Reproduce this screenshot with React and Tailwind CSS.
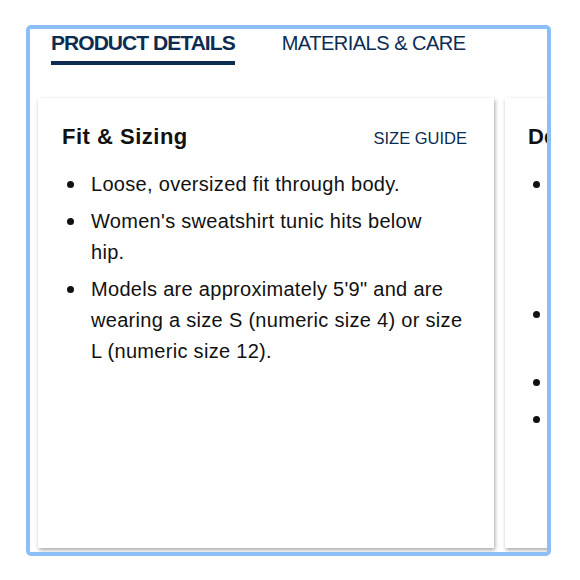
const fitItems = [
  ["Loose, oversized fit through body."],
  ["Women's sweatshirt tunic hits below", "hip."],
  ["Models are approximately 5'9\" and are", "wearing a size S (numeric size 4) or size", "L (numeric size 12)."],
];

const detailItems = [
  ["Soft brushed fleece", "interior for warmth", "and everyday", "comfort."],
  ["Ribbed cuffs and", "hem."],
  ["Dropped shoulders."],
  ["Imported."],
];

function Bullet({ lines }) {
  return (
    <li className="flex">
      <span className="w-[29px] shrink-0">
        <span className="block w-[7px] h-[7px] rounded-full bg-[#111] ml-[5px] mt-[12px]" />
      </span>
      <span>
        {lines.map((l, i) => (
          <span key={i} className="block whitespace-nowrap">
            {l}
          </span>
        ))}
      </span>
    </li>
  );
}

export default function App() {
  return (
    <div className="w-[580px] h-[580px] bg-white pt-[25px] pl-[26px] font-['Liberation_Sans',Arial,sans-serif]">
      <div className="w-[525px] h-[531px] border-4 border-[#8cbff6] rounded-[5px] overflow-hidden bg-white">
        {/* tabs */}
        <div className="flex gap-[47px] pl-[21px] text-[#0c2c52]">
          <div className="pb-[4px] border-b-4 border-[#0c2c52] text-[21px] leading-[28px] font-bold tracking-[-0.95px]">
            PRODUCT DETAILS
          </div>
          <div className="pb-[8px] text-[20px] leading-[28px] tracking-[-0.5px]">
            MATERIALS &amp; CARE
          </div>
        </div>

        {/* cards */}
        <div className="flex gap-[11px] pl-[8px] mt-[33px]">
          <div className="w-[456px] h-[450px] shrink-0 bg-white shadow-[1px_2px_4px_rgba(0,0,0,0.35)] pt-[25px] pl-[24px] pr-[27px]">
            <div className="flex items-baseline justify-between">
              <h2 className="text-[22px] leading-[28px] font-bold text-[#111] tracking-[0.5px]">
                Fit &amp; Sizing
              </h2>
              <a className="text-[16.5px] text-[#0c2c52]">SIZE GUIDE</a>
            </div>
            <ul className="mt-[18px] flex flex-col gap-[6px] text-[20px] leading-[31px] text-[#111] tracking-[0.3px]">
              {fitItems.map((lines) => (
                <Bullet key={lines[0]} lines={lines} />
              ))}
            </ul>
          </div>

          <div className="w-[456px] h-[450px] shrink-0 bg-white shadow-[1px_2px_4px_rgba(0,0,0,0.35)] pt-[25px] pl-[23px] pr-[27px]">
            <h2 className="text-[22px] leading-[28px] font-bold text-[#111]">Details</h2>
            <ul className="mt-[18px] flex flex-col gap-[6px] text-[20px] leading-[31px] text-[#111]">
              {detailItems.map((lines) => (
                <Bullet key={lines[0]} lines={lines} />
              ))}
            </ul>
          </div>
        </div>
      </div>
    </div>
  );
}
